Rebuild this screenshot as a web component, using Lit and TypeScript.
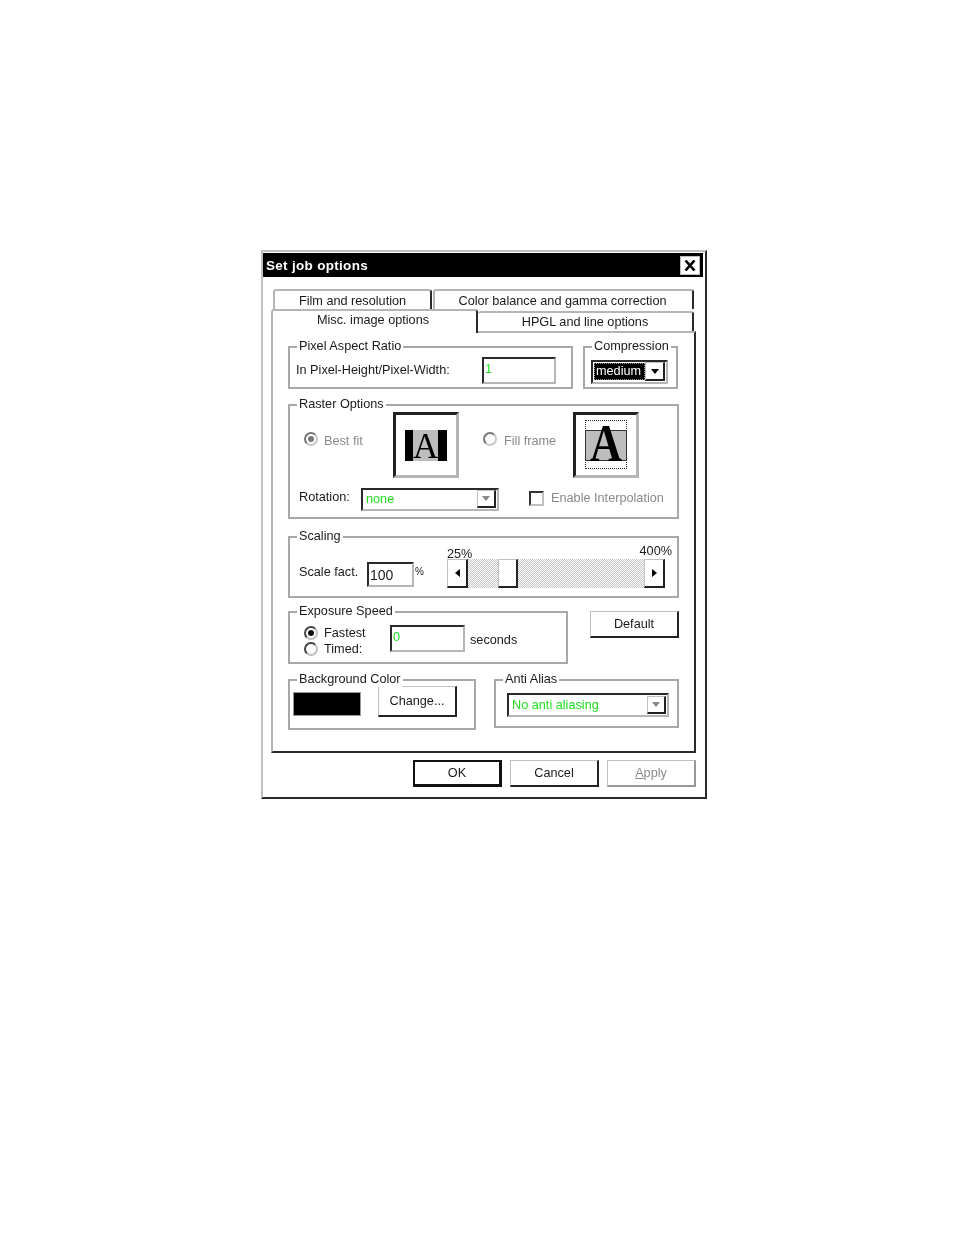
import { LitElement, html, css } from "lit";
import { customElement } from "lit/decorators.js";

@customElement("app-root")
class AppRoot extends LitElement {
  static styles = css`
    :host { display: block; width: 954px; height: 1235px; background: #fff; padding: 250px 0 0 261px; box-sizing: border-box;
      font: 12.7px "Liberation Sans", Arial, sans-serif; color: #1a1a1a; }
    * { box-sizing: border-box; }
    .win { width: 446px; height: 549px; border: 2px solid; border-color: #c0c0c0 #2a2a2a #2a2a2a #c0c0c0; background: #fff; padding: 1px 2px 0 0; filter: blur(0.55px); display: flex; flex-direction: column; }
    .title { height: 24px; background: #000; color: #fff; display: flex; align-items: center; justify-content: space-between; padding: 0 3px 0 3px; font-weight: bold; font-size: 13.5px; letter-spacing: .3px; }
    .close { width: 20px; height: 19px; background: #fff; border: 1px solid #bbb; display: flex; align-items: center; justify-content: center; }
    .body { padding: 12px 0 0 8px; display: flex; flex-direction: column; }
    .tabs { display: flex; padding-left: 2px; height: 20px; }
    .tab { border: 2px solid; border-color: #b5b5b5 #2a2a2a transparent #b5b5b5; border-bottom: 0; border-radius: 3px 3px 0 0; background: #fff; display: flex; justify-content: center; align-items: center; }
    .t1 { width: 159px; padding-top: 2px; } .t2 { width: 261px; margin-left: 1px; padding: 2px 2px 0 0; }
    .tabs2 { display: flex; height: 24px; margin-bottom: -2px; }
    .active { width: 207px; height: 24px; border-color: #b5b5b5 #2a2a2a transparent #b5b5b5; padding: 0 3px 4px 0; z-index: 1; }
    .t4 { width: 216px; height: 22px; margin-top: 2px; border-left: 0; padding: 0 0 2px 0; }
    .panel { width: 425px; height: 422px; border: 2px solid; border-color: #b5b5b5 #2a2a2a #2a2a2a #b5b5b5; padding: 13px 15px 0 15px; display: flex; flex-direction: column; }
    .row { display: flex; }
    .group { position: relative; border: 2px solid #a8a8a8; display: flex; align-items: center; flex: none; }
    .legend { position: absolute; top: -10px; left: 7px; background: #fff; padding: 0 2px; line-height: 16px; white-space: nowrap; }
    .input { border: 2px solid; border-color: #2a2a2a #b5b5b5 #b5b5b5 #2a2a2a; background: #fff; display: flex; align-items: center; padding-left: 1px; flex: none; }
    .green { color: #22e022; }
    .g1 { width: 285px; height: 43px; padding: 5px 15px 0 6px; justify-content: space-between; }
    .g1 .input { margin-top: 1px; }
    .g2 { width: 95px; height: 43px; margin-left: 10px; padding: 8px 0 0 6px; }
    .combo { border: 2px solid; border-color: #2a2a2a #b5b5b5 #b5b5b5 #2a2a2a; display: flex; align-items: center; justify-content: space-between; padding: 1px; flex: none; }
    .sel { width: 51px; height: 17px; background: #000; color: #fff; outline: 1px dotted #999; outline-offset: -1px; line-height: 16px; padding-left: 2px; }
    .dropbtn { width: 20px; height: 19px; border: 1px solid; border-color: #c0c0c0 #222 #222 #c0c0c0; border-width: 1px 2px 2px 1px; display: flex; align-items: center; justify-content: center; background: #fff; }
    .arrow { width: 0; height: 0; border: 4px solid transparent; border-top: 5px solid #000; border-bottom: 0; }
    .arrow.dis { border-top-color: #888; }
    .raster { width: 391px; height: 115px; margin-top: 15px; flex-direction: column; align-items: stretch; }
    .rrow { display: flex; align-items: center; }
    .r1 { height: 66px; margin-top: 6px; padding-left: 14px; }
    .r2 { height: 24px; margin-top: 9px; padding-left: 9px; }
    .radio { width: 14px; height: 14px; border-radius: 50%; border: 2px solid; border-color: #444 #c0c0c0 #c0c0c0 #444; display: flex; align-items: center; justify-content: center; flex: none; margin-right: 6px; background: #fff; }
    .up { margin-top: -12px; }
    .uptext { margin-top: -9px; }
    .radio.dim { border-color: #777 #c8c8c8 #c8c8c8 #777; }
    .radio i { width: 6px; height: 6px; border-radius: 50%; background: #111; }
    .radio.dim i { background: #777; }
    .dis { color: #8a8a8a; }
    .pic { width: 66px; height: 66px; border: 3px solid; border-color: #222 #b5b5b5 #b5b5b5 #222; position: relative; flex: none; overflow: hidden; }
    .fit { position: absolute; left: 9px; top: 15px; width: 42px; height: 31px; background: #000; }
    .fit b { position: absolute; left: 8px; top: 0; width: 25px; height: 31px; background: #bdbdbd; font: 35px/33px "Liberation Serif", serif; color: #000; text-align: center; }
    .fill { position: absolute; left: 9px; top: 5px; width: 42px; height: 49px; border: 1px dotted #222; }
    .fill u { position: absolute; left: -1px; top: 9px; width: 42px; height: 31px; background: #bdbdbd; border: 1px solid #333; text-decoration: none; }
    .fill b { position: absolute; left: 0; top: -7px; width: 40px; text-align: center; font: bold 52px/60px "Liberation Serif", serif; color: #000; transform: scaleX(.85); }
    .check { width: 15px; height: 15px; border: 2px solid; border-color: #333 #c0c0c0 #c0c0c0 #333; flex: none; margin: -2px 7px 0 30px; }
    .scale { width: 391px; height: 62px; margin-top: 17px; padding: 12px 0 0 9px; }
    .bar { position: relative; margin-left: 22px; width: 218px; height: 29px; display: flex; background: repeating-conic-gradient(#c4c4c4 0 25%, #fff 0 50%) 0 0/2px 2px; }
    .sbtn { width: 21px; height: 29px; background: #fff; border: 1px solid; border-color: #c0c0c0 #222 #222 #c0c0c0; border-width: 1px 2px 2px 1px; display: flex; align-items: center; justify-content: center; flex: none; }
    .tri { width: 0; height: 0; border: 4px solid transparent; }
    .tl { border-right: 5px solid #000; border-left: 0; } .tr { border-left: 5px solid #000; border-right: 0; }
    .thumb { margin-left: 30px; margin-right: auto; width: 20px; }
    .pct { position: absolute; font-size: 12.7px; line-height: 14px; }
    .p25 { left: 0; top: -12px; z-index: -1; } .p400 { right: -7px; top: -15px; }
    .btn { border: 1px solid; border-width: 1px 2px 2px 1px; border-color: #c0c0c0 #222 #222 #c0c0c0; background: #fff; display: flex; align-items: center; justify-content: center; flex: none; }
    .exp { width: 280px; height: 53px; padding: 6px 0 0 14px; }
    .rad-col { width: 86px; display: flex; flex-direction: column; gap: 1px; }
    .rl { display: flex; align-items: center; height: 15px; }
    .bg { width: 188px; height: 51px; padding: 0 0 6px 3px; }
    .swatch { width: 68px; height: 24px; margin-top: 4px; background: #000; border: 1px solid #999; flex: none; }
    .anti { width: 185px; height: 49px; margin-left: 18px; padding: 2px 0 0 11px; }
    .foot { display: flex; justify-content: flex-end; gap: 8px; margin-top: 7px; width: 425px; }
    .foot .btn { width: 89px; height: 27px; }
    .ok { border: 2px solid #111 !important; border-width: 2px 3px 3px 2px !important; }
    .und { text-decoration: underline; }
  `;

  render() {
    return html`<div class="win">
      <div class="title"><span>Set job options</span>
        <span class="close"><svg width="12" height="11" viewBox="0 0 12 11"><path d="M1.5 .5 10.5 10.5M10.5 .5 1.5 10.5" stroke="#000" stroke-width="2.6" fill="none"/></svg></span>
      </div>
      <div class="body">
        <div class="tabs"><div class="tab t1">Film and resolution</div><div class="tab t2">Color balance and gamma correction</div></div>
        <div class="tabs2"><div class="tab active">Misc. image options</div><div class="tab t4">HPGL and line options</div></div>
        <div class="panel">
          <div class="row">
            <div class="group g1"><span class="legend">Pixel Aspect Ratio</span><span>In Pixel-Height/Pixel-Width:</span>
              <span class="input green" style="width:74px;height:27px;padding-bottom:4px">1</span></div>
            <div class="group g2"><span class="legend">Compression</span>
              <span class="combo" style="width:77px;height:24px"><span class="sel">medium</span><span class="dropbtn"><span class="arrow"></span></span></span></div>
          </div>
          <div class="group raster"><span class="legend">Raster Options</span>
            <div class="rrow r1">
              <span class="radio dim up"><i></i></span><span class="dis uptext" style="width:69px">Best fit</span>
              <span class="pic"><span class="fit"><b>A</b></span></span>
              <span class="radio dim up" style="margin-left:24px"></span><span class="dis uptext" style="width:69px;margin-left:1px">Fill frame</span>
              <span class="pic"><span class="fill"><u></u><b>A</b></span></span>
            </div>
            <div class="rrow r2"><span style="width:62px;margin-top:-4px">Rotation:</span>
              <span class="combo green" style="width:138px;height:23px;padding-left:3px"><span>none</span><span class="dropbtn" style="height:18px;width:19px"><span class="arrow dis"></span></span></span>
              <span class="check"></span><span class="dis" style="margin-top:-2px">Enable Interpolation</span></div>
          </div>
          <div class="group scale"><span class="legend">Scaling</span>
            <span style="width:68px;margin-top:-3px">Scale fact.</span>
            <span class="input" style="width:47px;height:25px;font-size:14px;padding-top:1px;margin-top:2px">100</span>
            <span style="font-size:10px;width:10px;margin:-3px 0 0 1px">%</span>
            <div class="bar"><span class="pct p25">25%</span><span class="pct p400">400%</span>
              <span class="sbtn"><span class="tri tl"></span></span><span class="sbtn thumb"></span><span class="sbtn"><span class="tri tr"></span></span></div>
          </div>
          <div class="row" style="margin-top:13px;justify-content:space-between">
            <div class="group exp"><span class="legend">Exposure Speed</span>
              <div class="rad-col"><div class="rl"><span class="radio"><i></i></span><span style="padding-top:1px">Fastest</span></div><div class="rl"><span class="radio"></span>Timed:</div></div>
              <span class="input green" style="width:75px;height:27px;padding-bottom:4px;margin:-4px 5px 0 0">0</span><span style="margin-top:-1px">seconds</span></div>
            <span class="btn" style="width:89px;height:27px">Default</span>
          </div>
          <div class="row" style="margin-top:15px">
            <div class="group bg"><span class="legend">Background Color</span><span class="swatch"></span>
              <span class="btn" style="width:79px;height:31px;margin-left:17px">Change...</span></div>
            <div class="group anti"><span class="legend">Anti Alias</span>
              <span class="combo green" style="width:162px;height:24px;padding-left:3px"><span>No anti aliasing</span><span class="dropbtn" style="height:18px;width:19px"><span class="arrow dis"></span></span></span></div>
          </div>
        </div>
        <div class="foot"><span class="btn ok">OK</span><span class="btn">Cancel</span>
          <span class="btn dis" style="border-color:#c0c0c0 #999 #999 #c0c0c0"><span><span class="und">A</span>pply</span></span></div>
      </div>
    </div>`;
  }
}
